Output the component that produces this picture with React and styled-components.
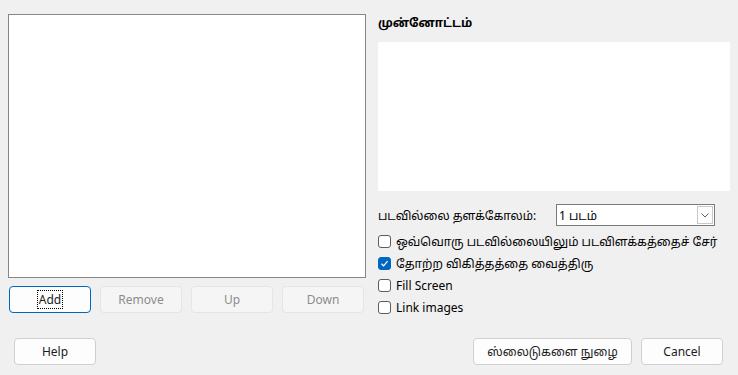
import React from 'react';
import styled, { createGlobalStyle } from 'styled-components';

const GlobalStyle = createGlobalStyle`
  html, body {
    margin: 0;
    padding: 0;
    background: #f0f0f0;
  }
  body {
    font-family: "Segoe UI", "Noto Sans", "Noto Sans Tamil", "Open Sans", sans-serif;
    font-size: 12px;
    color: #000;
  }
`;

const Dialog = styled.div`
  width: 738px;
  height: 375px;
  box-sizing: border-box;
  padding: 14px 8px 0 8px;
  display: flex;
  flex-direction: column;
`;

const Main = styled.div`
  display: flex;
  gap: 12px;
`;

const LeftColumn = styled.div`
  width: 358px;
  display: flex;
  flex-direction: column;
`;

const ListBox = styled.div`
  height: 264px;
  box-sizing: border-box;
  background: #fff;
  border: 1px solid #868686;
`;

const ButtonRow = styled.div`
  display: flex;
  gap: 9px;
  padding: 8px 0 0 1px;
`;

const Button = styled.button`
  width: 82px;
  height: 27px;
  box-sizing: border-box;
  border-radius: 4px;
  font: inherit;
  font-size: 12px;
  padding: 0;
  background: ${p => (p.disabled ? '#f5f5f5' : '#fdfdfd')};
  color: ${p => (p.disabled ? '#8c8c8c' : '#1b1b1b')};
  border: 1px solid ${p => (p.$primary ? '#0067c0' : p.disabled ? '#e5e5e5' : '#d0d0d0')};
  box-shadow: ${p => (p.$primary ? 'inset 0 0 0 0 #0067c0' : 'none')};
  width: ${p => p.$wide ? '159px' : '82px'};
`;

const FocusText = styled.span`
  outline: 1px dotted #000;
  outline-offset: 0;
  padding: 0 1px;
`;

const RightColumn = styled.div`
  width: 352px;
  display: flex;
  flex-direction: column;
`;

const Heading = styled.div`
  font-weight: bold;
  font-size: 12px;
  height: 16px;
  line-height: 16px;
  margin-top: 1px;
`;

const Preview = styled.div`
  margin-top: 11px;
  height: 149px;
  background: #fff;
`;

const FieldRow = styled.div`
  display: flex;
  align-items: center;
  margin-top: 13px;
  height: 22px;
`;

const FieldLabel = styled.span`
  width: 178px;
`;

const Combo = styled.div`
  width: 159px;
  height: 22px;
  box-sizing: border-box;
  background: #fff;
  border: 1px solid #7a7a7a;
  display: flex;
  align-items: center;
  justify-content: space-between;
  padding: 0 1px 0 2px;
`;

const ComboArrow = styled.span`
  width: 16px;
  height: 18px;
  box-sizing: border-box;
  border: 1px solid #c8c8c8;
  background: #fdfdfd;
  display: flex;
  align-items: center;
  justify-content: center;
`;

const CheckList = styled.div`
  display: flex;
  flex-direction: column;
  margin-top: 4px;
`;

const CheckRow = styled.label`
  display: flex;
  align-items: center;
  gap: 5px;
  height: 22px;
`;

const Box = styled.span`
  width: 13px;
  height: 13px;
  box-sizing: border-box;
  border-radius: 3px;
  border: 1px solid ${p => (p.$checked ? '#0067c0' : '#5c5c5c')};
  background: ${p => (p.$checked ? '#0067c0' : '#fff')};
  display: flex;
  align-items: center;
  justify-content: center;
`;

const Footer = styled.div`
  display: flex;
  align-items: center;
  margin-top: 20px;
  padding: 0 7px 0 6px;
`;

const FooterRight = styled.div`
  margin-left: auto;
  display: flex;
  gap: 9px;
`;

const Check = ({ checked, children }) => (
  <CheckRow>
    <Box $checked={checked}>
      {checked && (
        <svg width="9" height="9" viewBox="0 0 9 9">
          <path d="M1.5 4.8 L3.6 6.8 L7.6 2.2" stroke="#fff" strokeWidth="1.2" fill="none" />
        </svg>
      )}
    </Box>
    <span>{children}</span>
  </CheckRow>
);

export default function App() {
  return (
    <>
      <GlobalStyle />
      <Dialog>
        <Main>
          <LeftColumn>
            <ListBox />
            <ButtonRow>
              <Button $primary>
                <FocusText>Add</FocusText>
              </Button>
              <Button disabled>Remove</Button>
              <Button disabled>Up</Button>
              <Button disabled>Down</Button>
            </ButtonRow>
          </LeftColumn>
          <RightColumn>
            <Heading>முன்னோட்டம்</Heading>
            <Preview />
            <FieldRow>
              <FieldLabel>படவில்லை தளக்கோலம்:</FieldLabel>
              <Combo>
                <span>1 படம்</span>
                <ComboArrow>
                  <svg width="8" height="5" viewBox="0 0 8 5">
                    <path d="M0.5 0.5 L4 4 L7.5 0.5" stroke="#606060" strokeWidth="1" fill="none" />
                  </svg>
                </ComboArrow>
              </Combo>
            </FieldRow>
            <CheckList>
              <Check>ஒவ்வொரு படவில்லையிலும் படவிளக்கத்தைச் சேர்</Check>
              <Check checked>தோற்ற விகித்தத்தை வைத்திரு</Check>
              <Check>Fill Screen</Check>
              <Check>Link images</Check>
            </CheckList>
          </RightColumn>
        </Main>
        <Footer>
          <Button>Help</Button>
          <FooterRight>
            <Button $wide>ஸ்லைடுகளை நுழை</Button>
            <Button>Cancel</Button>
          </FooterRight>
        </Footer>
      </Dialog>
    </>
  );
}
